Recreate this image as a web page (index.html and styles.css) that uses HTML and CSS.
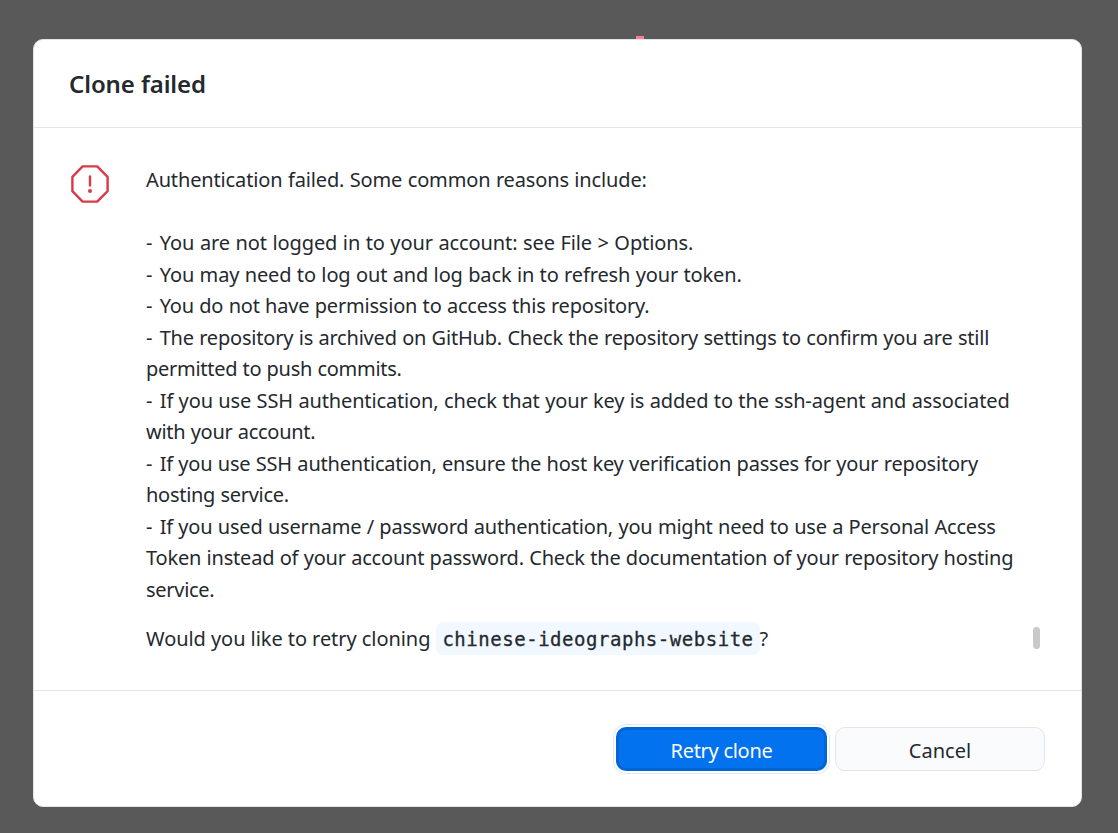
FILE: index.html
```html
<!DOCTYPE html>
<html lang="en">
<head>
<meta charset="utf-8">
<title>Clone failed</title>
<link rel="stylesheet" href="styles.css">
</head>
<body>
<main class="dialog" role="alertdialog" aria-labelledby="title">
  <span class="marker"></span>
  <header class="header"><h1 id="title">Clone failed</h1></header>
  <section class="content">
    <svg class="icon" viewBox="0 0 40 40" fill="none" stroke="#d73a49" stroke-width="2.4" stroke-linejoin="round" stroke-linecap="round">
      <path d="M12.6 2.4H27.2L37.6 12.8V27.2L27.2 37.6H12.6L2.4 27.2V12.8Z"/>
      <path d="M20 12.4V21.4"/>
      <circle cx="20" cy="27" r="2" fill="#d73a49" stroke="none"/>
    </svg>
    <div class="message">
      <p class="reasons"><span>Authentication failed. Some common reasons include:</span>

<span class="loose"><i class="dash">-</i> You are not logged in to your account: see File &gt; Options.</span>
<span><i class="dash">-</i> You may need to log out and log back in to refresh your token.</span>
<span class="snug"><i class="dash">-</i> You do not have permission to access this repository.</span>
<span class="snug"><i class="dash">-</i> The repository is archived on GitHub. Check the repository settings to confirm you are still</span>
<span class="tight">permitted to push commits.</span>
<span><i class="dash">-</i> If you use SSH authentication, check that your key is added to the ssh-agent and associated</span>
<span class="tight">with your account.</span>
<span class="snug"><i class="dash">-</i> If you use SSH authentication, ensure the host key verification passes for your repository</span>
<span class="tight">hosting service.</span>
<span class="snug"><i class="dash">-</i> If you used username / password authentication, you might need to use a Personal Access</span>
<span class="snug">Token instead of your account password. Check the documentation of your repository hosting</span>
<span class="tight">service.</span></p>
      <p class="question"><span>Would you like to retry cloning</span><code>chinese-ideographs-website</code><span>?</span></p>
    </div>
    <span class="scrollbar"></span>
  </section>
  <footer class="footer">
    <button class="button primary">Retry clone</button>
    <button class="button">Cancel</button>
  </footer>
</main>
</body>
</html>
```
FILE: styles.css
```css
* { box-sizing: border-box; }
body {
  margin: 0;
  padding: 39px 36px 26px 33px;
  height: 833px;
  overflow: hidden;
  background: #595959;
  color: #24292e;
  font-family: "Noto Sans", "Open Sans", sans-serif;
  font-size: 20px;
}
.dialog {
  position: relative;
  display: flex;
  flex-direction: column;
  width: 1049px;
  height: 768px;
  background: #fff;
  border: 1px solid #e1e4e8;
  border-radius: 10px;
}
.marker {
  position: absolute;
  top: -4px;
  left: 602px;
  width: 8px;
  height: 3px;
  background: #fc8091;
}
.header {
  display: flex;
  align-items: center;
  height: 88px;
  padding: 0 35px;
  border-bottom: 1px solid #e1e4e8;
}
h1 {
  margin: 0;
  font-size: 24px;
  font-weight: 600;
  letter-spacing: -0.1px;
}
.content {
  display: flex;
  height: 563px;
  padding: 36px 41px 35px 36px;
  border-bottom: 1px solid #e1e4e8;
}
.icon { flex: none; width: 40px; height: 40px; }
.message { flex: 1; margin-left: 36px; white-space: nowrap; }
p { margin: 0; line-height: 31.5px; }
.reasons { white-space: pre; letter-spacing: -0.14px; word-spacing: 0.4px; }
.loose { letter-spacing: -0.09px; }
.snug { letter-spacing: -0.2px; }
.tight { letter-spacing: -0.28px; }
.dash { margin-right: 2px; font-style: normal; }
.question { display: flex; align-items: center; height: 33px; margin-top: 17px; letter-spacing: -0.06px; }
.question code {
  height: 33px;
  margin-left: 6px;
  padding: 0 6px;
  border-radius: 7px;
  background: #f1f8ff;
  line-height: 34px;
  font-family: "DejaVu Sans Mono", monospace;
  font-size: 19px;
  letter-spacing: 0.53px;
  -webkit-text-stroke: 0.3px #24292e;
}
.scrollbar {
  align-self: flex-end;
  flex: none;
  width: 7px;
  height: 22px;
  margin-bottom: 6px;
  border-radius: 4px;
  background: #c9c9c9;
}
.footer {
  display: flex;
  justify-content: flex-end;
  gap: 8px;
  padding: 36px 36px 0;
}
.button {
  width: 210px;
  height: 44px;
  padding: 2px 0 0;
  border: 1px solid #e1e4e8;
  border-radius: 10px;
  background: #fafbfc;
  color: #24292e;
  font: 20px "Noto Sans", sans-serif;
}
.button.primary {
  width: 211px;
  border: 3px solid #0366d6;
  background: #0372ef;
  color: #fff;
  letter-spacing: -0.28px;
  box-shadow: 0 0 0 2px #fff, 0 0 0 3px #dbeafb;
}
```
